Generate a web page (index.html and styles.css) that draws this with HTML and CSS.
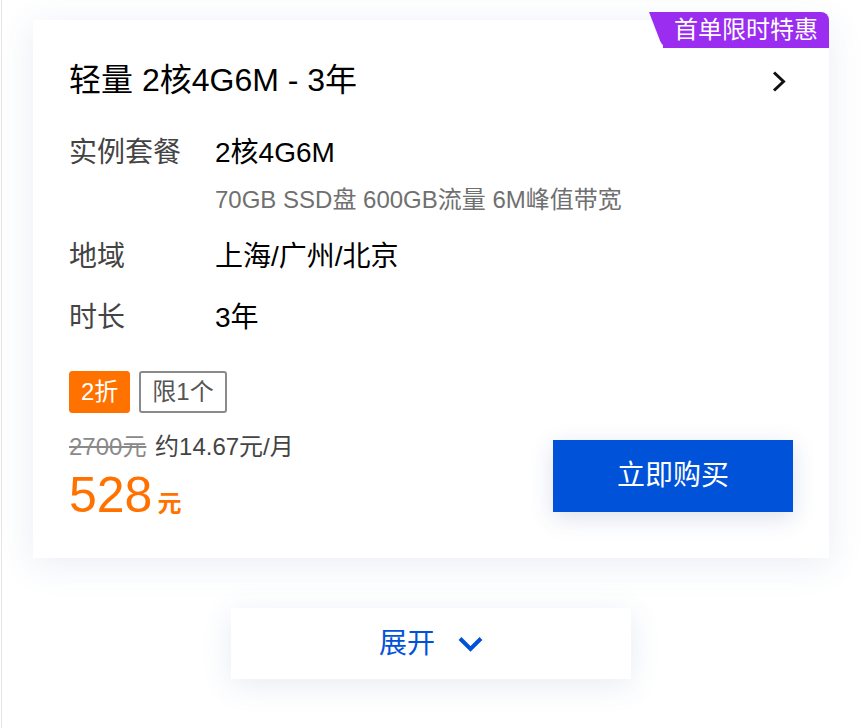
FILE: index.html
```html
<!DOCTYPE html>
<html lang="zh-CN">
<head>
<meta charset="utf-8">
<title>轻量 2核4G6M - 3年</title>
<link rel="stylesheet" href="styles.css">
</head>
<body>
<div class="page">
  <div class="wrap">
    <div class="card">
      <div class="badge">首单限时特惠</div>
      <div class="title-row">
        <h2 class="title">轻量 2核4G6M - 3年</h2>
        <svg class="arrow-right" width="14" height="21" viewBox="0 0 14 21"><polyline points="2,1.5 11.5,10.5 2,19.5" fill="none" stroke="#111" stroke-width="3"/></svg>
      </div>
      <div class="spec">
        <div class="label">实例套餐</div>
        <div class="value">
          <div class="main">2核4G6M</div>
          <div class="sub">70GB SSD盘 600GB流量 6M峰值带宽</div>
        </div>
      </div>
      <div class="spec">
        <div class="label">地域</div>
        <div class="value"><div class="main">上海/广州/北京</div></div>
      </div>
      <div class="spec">
        <div class="label">时长</div>
        <div class="value"><div class="main">3年</div></div>
      </div>
      <div class="footer">
        <div class="price-col">
          <div class="tags">
            <span class="tag tag-off">2折</span>
            <span class="tag tag-limit">限1个</span>
          </div>
          <div class="price-line">
            <span class="orig">2700元</span>
            <span class="monthly">约14.67元/月</span>
          </div>
          <div class="price"><span class="num">528</span><span class="unit">元</span></div>
        </div>
        <button class="buy">立即购买</button>
      </div>
    </div>
    <div class="expand">
      <span class="expand-text">展开</span>
      <svg class="arrow-down" width="25" height="17" viewBox="0 0 25 17"><polyline points="2,2.5 12.5,13 23,2.5" fill="none" stroke="#0052d9" stroke-width="4"/></svg>
    </div>
  </div>
</div>
</body>
</html>
```

FILE: styles.css
```css
* { box-sizing: border-box; }
html, body {
  margin: 0;
  padding: 0;
  background: #fff;
}
body {
  font-family: "Liberation Sans", "Noto Sans CJK SC", sans-serif;
  color: #000;
}
.page {
  margin-left: 1px;
  border-left: 1px solid #e4e4e6;
  min-height: 728px;
  padding-top: 20px;
  overflow: hidden;
}
.wrap {
  width: 796px;
  margin-left: 31px;
}
.card {
  position: relative;
  background: #fff;
  padding: 40px 36px 38px 36px;
  box-shadow: 0 6px 34px rgba(55, 90, 160, 0.11);
}
.badge {
  position: absolute;
  top: -8px;
  right: 0;
  z-index: 1;
  height: 36px;
  padding: 0 11px 0 11px;
  background: #9b2df0;
  color: #fff;
  font-size: 24px;
  line-height: 36px;
  border-top-right-radius: 8px;
}
.badge::before {
  content: "";
  position: absolute;
  left: -14px;
  top: 0;
  width: 36px;
  height: 36px;
  background: #9b2df0;
  transform: skewX(21deg);
  transform-origin: top left;
  border-bottom-left-radius: 7px;
  z-index: -1;
}
.title-row {
  display: flex;
  align-items: center;
  justify-content: space-between;
  height: 40px;
}
.title {
  margin: 0;
  font-size: 32px;
  font-weight: normal;
  line-height: 40px;
  color: #000;
}
.arrow-right {
  margin-right: 7px;
  margin-top: 2px;
}
.spec {
  display: flex;
  margin-top: 21px;
}
.title-row + .spec {
  margin-top: 33px;
}
.label {
  width: 146px;
  flex: none;
  font-size: 28px;
  line-height: 40px;
  color: #444;
}
.value .main {
  font-size: 28px;
  line-height: 40px;
  color: #000;
}
.value .sub {
  margin-top: 11px;
  font-size: 24px;
  line-height: 32px;
  color: #707070;
}
.footer {
  display: flex;
  justify-content: space-between;
  align-items: flex-end;
  margin-top: 33px;
}
.tags {
  display: flex;
  gap: 9px;
}
.tag {
  display: inline-block;
  height: 42px;
  line-height: 40px;
  font-size: 24px;
  padding: 0 11px;
  border-radius: 3px;
  border: 1px solid transparent;
}
.tag-off {
  background: #ff7200;
  border-color: #ff7200;
  color: #fff;
}
.tag-limit {
  border: 2px solid #8a8a8a;
  line-height: 38px;
  color: #555;
}
.price-line {
  margin-top: 18px;
  font-size: 24px;
  line-height: 32px;
}
.orig {
  color: #8a8a8a;
  text-decoration: line-through;
}
.monthly {
  color: #444;
  margin-left: 2px;
}
.price {
  margin-top: 7px;
  height: 50px;
  line-height: 50px;
  color: #ff7200;
}
.num {
  font-size: 50px;
  line-height: 50px;
}
.unit {
  font-size: 24px;
  font-weight: bold;
  line-height: 24px;
  margin-left: 5px;
}
.buy {
  width: 240px;
  height: 72px;
  margin-bottom: 8px;
  border: none;
  border-radius: 0;
  background: #0052d9;
  color: #fff;
  font-family: "Liberation Sans", "Noto Sans CJK SC", sans-serif;
  font-size: 28px;
  line-height: 40px;
  box-shadow: 0 6px 22px rgba(40, 70, 140, 0.16);
  cursor: pointer;
}
.expand {
  width: 400px;
  height: 71px;
  margin: 50px auto 0;
  background: #fff;
  display: flex;
  align-items: center;
  justify-content: center;
  gap: 23px;
  box-shadow: 0 6px 30px rgba(55, 90, 160, 0.12);
}
.expand-text {
  font-size: 28px;
  line-height: 40px;
  color: #0052d9;
}
.arrow-down {
  margin-top: 2px;
}
```
